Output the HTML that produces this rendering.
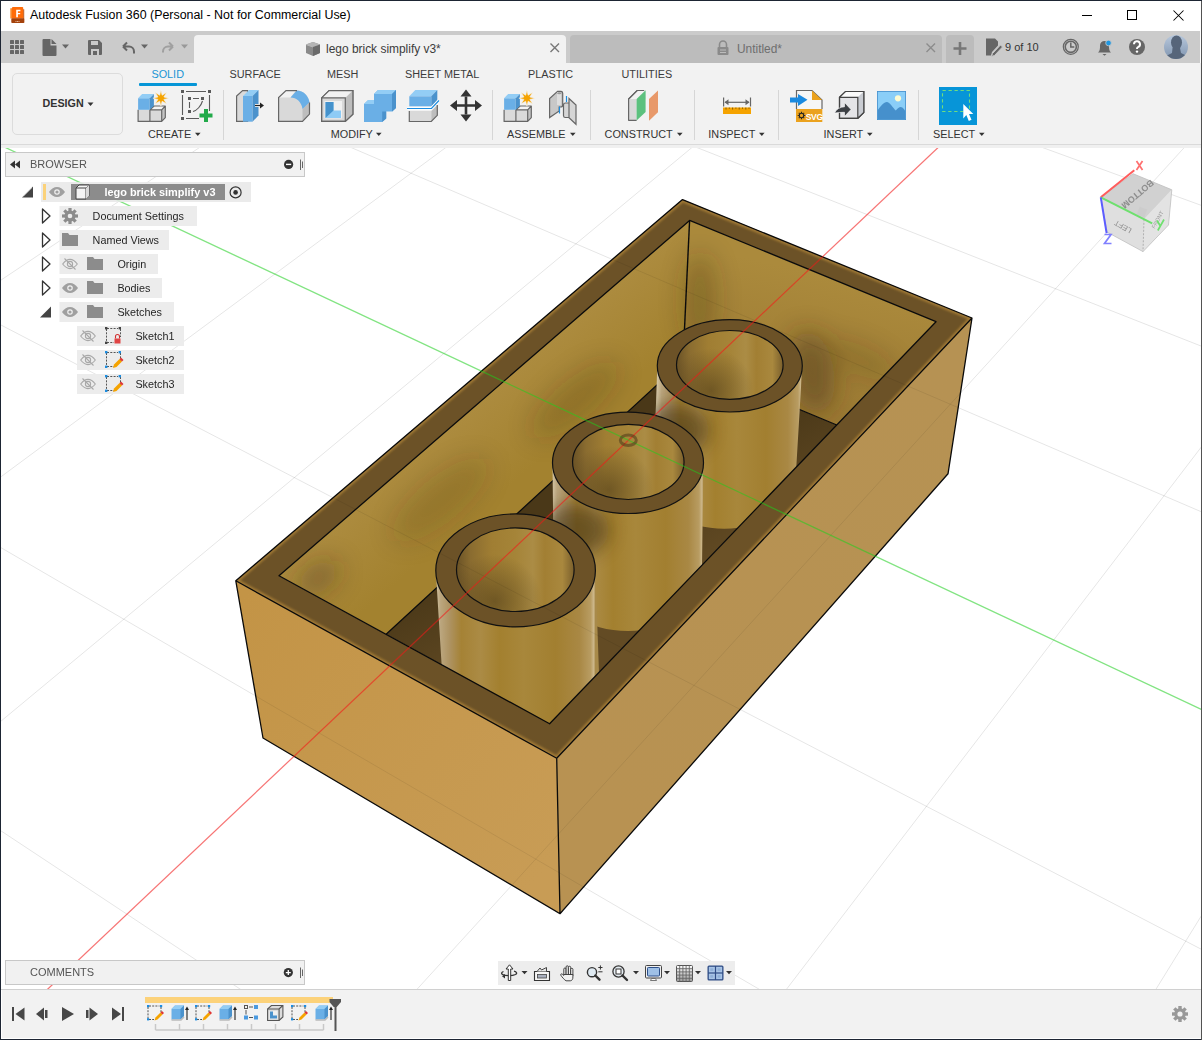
<!DOCTYPE html>
<html><head><meta charset="utf-8">
<style>
*{margin:0;padding:0;box-sizing:border-box}
html,body{width:1202px;height:1040px;overflow:hidden;background:#1d2533;font-family:"Liberation Sans",sans-serif}
.a{position:absolute}
.t{position:absolute;white-space:nowrap;line-height:1}
svg{position:absolute;overflow:visible}
</style></head><body>

<div class="a" style="left:1px;top:1px;width:1200px;height:1038px;background:#fff"></div>
<div class="a" style="left:1201px;top:1px;width:1px;height:1039px;background:#525252"></div>
<svg style="left:9px;top:6px" width="17" height="19" viewBox="0 0 17 19">
<path d="M1.3 2.2h2v10.3h-2z" fill="#f98a2c"/>
<rect x="3" y="1" width="11.2" height="11.6" rx="0.8" fill="#ff6c0a"/>
<path d="M14.2 3.2h1v13.5h-1z" fill="#c4520c"/>
<rect x="2.3" y="12.3" width="12.9" height="4.8" rx="0.8" fill="#a4420c"/>
<path d="M7.2 3.8h4.2v1.5h-2.5v1.6h2.3v1.4h-2.3v3h-1.7z" fill="#fff"/>
<path d="M6.5 15.5h4.5" stroke="#e8b898" stroke-width="1.2" stroke-dasharray="1 0.5"/>
</svg>
<div class="t" style="left:30px;top:9.49px;font-size:12.42px;color:#000;font-weight:normal;letter-spacing:0px">Autodesk Fusion 360 (Personal - Not for Commercial Use)</div>
<svg style="left:1075px;top:5px" width="120" height="22">
<path d="M7 10.5h10" stroke="#000" stroke-width="1"/>
<rect x="52.5" y="5.5" width="9" height="9" fill="none" stroke="#000" stroke-width="1"/>
<path d="M98.5 5.5l10 10M108.5 5.5l-10 10" stroke="#000" stroke-width="1.05"/>
</svg>
<div class="a" style="left:1px;top:31px;width:1199px;height:32px;background:#cbcbcb"></div>
<div class="a" style="left:194px;top:35px;width:372px;height:28px;background:#f2f2f2;border-radius:4px 4px 0 0"></div>
<div class="a" style="left:570px;top:35px;width:372px;height:28px;background:#bcbcbc;border-radius:4px 4px 0 0"></div>
<div class="a" style="left:946px;top:35px;width:28px;height:28px;background:#bcbcbc;border-radius:4px 4px 0 0"></div>
<svg style="left:0px;top:31px" width="200" height="32">
<g fill="#666">
<rect x="10" y="9" width="4" height="4" rx="0.6"/><rect x="15" y="9" width="4" height="4" rx="0.6"/><rect x="20" y="9" width="4" height="4" rx="0.6"/>
<rect x="10" y="14" width="4" height="4" rx="0.6"/><rect x="15" y="14" width="4" height="4" rx="0.6"/><rect x="20" y="14" width="4" height="4" rx="0.6"/>
<rect x="10" y="19" width="4" height="4" rx="0.6"/><rect x="15" y="19" width="4" height="4" rx="0.6"/><rect x="20" y="19" width="4" height="4" rx="0.6"/>
<path d="M43 8h7.5v6.5h6v9.5a1 1 0 0 1-1 1h-12a1 1 0 0 1-1-1v-15a1 1 0 0 1 1-1z"/><path d="M51.5 8l5 5h-5z"/>
<path d="M62 13.5h7l-3.5 4z"/>
<path d="M88 9h11l3 3v11a1 1 0 0 1-1 1h-12a1 1 0 0 1-1-1v-13a1 1 0 0 1 1-1zM91 10v4h7v-4zM91 18v6h2v-4h4v4h2v-6z"/>
<path d="M141 13.5h7l-3.5 4z"/>
</g>
<path d="M123 15.5l4-4M123 15.5l4 4M123.5 15.5h5.5a5 5 0 0 1 5 5v2" fill="none" stroke="#666" stroke-width="2"/>
<g fill="#999"><path d="M181 13.5h7l-3.5 4z"/></g>
<path d="M173 15.5l-4-4M173 15.5l-4 4M172.5 15.5h-4.5a5 5 0 0 0 -5 5v1" fill="none" stroke="#a0a0a0" stroke-width="2"/>
</svg>
<svg style="left:304px;top:40px" width="18" height="18" viewBox="0 0 18 18">
<path d="M2 4.5l7-2.5 7 2.5v8.5l-7 3-7-3z" fill="#8a8a8a"/>
<path d="M2 4.5l7 2.5 7-2.5" fill="none" stroke="#c8c8c8" stroke-width="0.8"/>
<path d="M2 4.5l7-2.5 7 2.5-7 2.5z" fill="#b5b5b5"/>
<path d="M9 7v9l7-3v-8.5z" fill="#6b6b6b"/>
</svg>
<div class="t tab1" style="left:326px;top:43.89px;font-size:11.94px;color:#3c3c3c;font-weight:normal;">lego brick simplify v3*</div>
<svg style="left:548px;top:41px" width="14" height="14"><path d="M2.5 2.5l8.5 8.5M11 2.5l-8.5 8.5" stroke="#777" stroke-width="1.4"/></svg>
<svg style="left:716px;top:40px" width="14" height="16" viewBox="0 0 14 16">
<path d="M3.5 7v-2.5a3.5 3.5 0 0 1 7 0v2.5" fill="none" stroke="#8a8a8a" stroke-width="1.6"/>
<rect x="1.5" y="7" width="11" height="8" rx="1" fill="#8a8a8a"/>
<path d="M4 10h6M4 12.5h6" stroke="#bcbcbc" stroke-width="1"/>
</svg>
<div class="t tab2" style="left:737px;top:43.93px;font-size:11.9px;color:#6e6e6e;font-weight:normal;">Untitled*</div>
<svg style="left:924px;top:41px" width="14" height="14"><path d="M2.5 2.5l8.5 8.5M11 2.5l-8.5 8.5" stroke="#8c8c8c" stroke-width="1.4"/></svg>
<svg style="left:952px;top:41px" width="16" height="16"><path d="M1.5 7.5h13M8 1v13" stroke="#777" stroke-width="2.6"/></svg>
<svg style="left:980px;top:31px" width="220" height="32">
<path d="M6 7.5h9l3 3v4l-6 6.5-1 3.5h-5z" fill="#666"/>
<path d="M12.5 22.5l8-8.5 2 2-8 8.5-3 1z" fill="#666" stroke="#c9c9c9" stroke-width="1"/>
<circle cx="90.8" cy="15.8" r="7.5" fill="none" stroke="#666" stroke-width="1.2"/>
<circle cx="90.8" cy="15.8" r="5.6" fill="none" stroke="#666" stroke-width="1.6"/>
<path d="M90.8 11.5v4.6h3.5" fill="none" stroke="#666" stroke-width="1.5"/>
<path d="M118 21.5c2-1.5 2-4 2-7a4.5 4.5 0 0 1 9 0c0 3 0 5.5 2 7z" fill="#666"/>
<path d="M122.5 23h4l-2 1.8z" fill="#666"/>
<circle cx="128.5" cy="12" r="2.8" fill="#1e96e0" stroke="#c9c9c9" stroke-width="0.8"/>
<circle cx="157" cy="16" r="8" fill="#666"/>
<path d="M154 13.3a3 3 0 1 1 4 2.8c-1 .4-1 1-1 2" fill="none" stroke="#fff" stroke-width="2"/>
<circle cx="157" cy="20.6" r="1.2" fill="#fff"/>
<defs><linearGradient id="avg" x1="0" y1="0" x2="0" y2="1"><stop offset="0" stop-color="#b8c8dc"/><stop offset="1" stop-color="#8095b0"/></linearGradient>
<clipPath id="avc"><circle cx="196" cy="16" r="12"/></clipPath></defs>
<circle cx="196" cy="16" r="12" fill="url(#avg)"/>
<g clip-path="url(#avc)" fill="#56657a"><ellipse cx="196.5" cy="11.5" rx="5.5" ry="7"/><path d="M192.5 17h7.5l1 5 6 3v4h-21v-4l6-3z"/></g>
</svg>
<div class="t ver" style="left:1005px;top:41.69px;font-size:11px;color:#333;font-weight:normal;">9 of 10</div>
<div class="a" style="left:1px;top:63px;width:1200px;height:81px;background:#f2f2f2"></div>
<div class="a" style="left:1px;top:144px;width:1200px;height:1px;background:#dadada"></div>
<div class="a" style="left:1px;top:145px;width:1200px;height:3px;background:#f0f0f0"></div>
<div class="a" style="left:12px;top:73px;width:111px;height:62px;border:1.5px solid #dcdcdc;border-radius:5px"></div>
<div class="t design" style="left:42.5px;top:98.30px;font-size:10.75px;color:#333;font-weight:bold;">DESIGN</div>
<svg style="left:87px;top:101px" width="8" height="6"><path d="M0.5 1.5h6l-3 3.5z" fill="#333"/></svg>
<div class="t tb solid" style="left:151.4px;top:69.30px;font-size:10.87px;color:#1a95d5;font-weight:normal;">SOLID</div>
<div class="a" style="left:139px;top:83px;width:58px;height:3px;background:#0696d7;border-radius:1px"></div>
<div class="t tb" style="left:229.5px;top:69.32px;font-size:10.85px;color:#3c3c3c;font-weight:normal;">SURFACE</div>
<div class="t tb" style="left:327px;top:69.32px;font-size:10.85px;color:#3c3c3c;font-weight:normal;">MESH</div>
<div class="t tb" style="left:405px;top:69.32px;font-size:10.85px;color:#3c3c3c;font-weight:normal;">SHEET METAL</div>
<div class="t tb" style="left:528px;top:69.32px;font-size:10.85px;color:#3c3c3c;font-weight:normal;">PLASTIC</div>
<div class="t tb" style="left:621.5px;top:69.32px;font-size:10.85px;color:#3c3c3c;font-weight:normal;">UTILITIES</div>
<div class="t gl" style="left:148px;top:128.82px;font-size:10.85px;color:#333;font-weight:normal;">CREATE</div>
<svg style="left:194.5px;top:131px" width="8" height="6"><path d="M0 1.8h5.6l-2.8 3.2z" fill="#333"/></svg>
<div class="t gl" style="left:330.7px;top:128.82px;font-size:10.85px;color:#333;font-weight:normal;">MODIFY</div>
<svg style="left:376px;top:131px" width="8" height="6"><path d="M0 1.8h5.6l-2.8 3.2z" fill="#333"/></svg>
<div class="t gl" style="left:507px;top:128.82px;font-size:10.85px;color:#333;font-weight:normal;">ASSEMBLE</div>
<svg style="left:569.5px;top:131px" width="8" height="6"><path d="M0 1.8h5.6l-2.8 3.2z" fill="#333"/></svg>
<div class="t gl" style="left:604.6px;top:128.82px;font-size:10.85px;color:#333;font-weight:normal;">CONSTRUCT</div>
<svg style="left:676.5px;top:131px" width="8" height="6"><path d="M0 1.8h5.6l-2.8 3.2z" fill="#333"/></svg>
<div class="t gl" style="left:708.3px;top:128.82px;font-size:10.85px;color:#333;font-weight:normal;">INSPECT</div>
<svg style="left:758.5px;top:131px" width="8" height="6"><path d="M0 1.8h5.6l-2.8 3.2z" fill="#333"/></svg>
<div class="t gl" style="left:823.6px;top:128.82px;font-size:10.85px;color:#333;font-weight:normal;">INSERT</div>
<svg style="left:866.5px;top:131px" width="8" height="6"><path d="M0 1.8h5.6l-2.8 3.2z" fill="#333"/></svg>
<div class="t gl" style="left:933px;top:128.82px;font-size:10.85px;color:#333;font-weight:normal;">SELECT</div>
<svg style="left:978.5px;top:131px" width="8" height="6"><path d="M0 1.8h5.6l-2.8 3.2z" fill="#333"/></svg>
<div class="a" style="left:223px;top:90px;width:1px;height:50px;background:#d6d6d6"></div>
<div class="a" style="left:492px;top:90px;width:1px;height:50px;background:#d6d6d6"></div>
<div class="a" style="left:590px;top:90px;width:1px;height:50px;background:#d6d6d6"></div>
<div class="a" style="left:694px;top:90px;width:1px;height:50px;background:#d6d6d6"></div>
<div class="a" style="left:778px;top:90px;width:1px;height:50px;background:#d6d6d6"></div>
<div class="a" style="left:918px;top:90px;width:1px;height:50px;background:#d6d6d6"></div>
<svg style="left:0;top:0" width="1202" height="150"><g transform="translate(137.5,90)">
<path d="M0.6 19.8h11.8v11.6h-11.8z" fill="#dadada"/>
<path d="M12.4 19.8h11.8v11.6h-11.8z" fill="#dadada"/>
<path d="M12.4 19.8l4.2-3.8h11.2l-3.6 3.8z" fill="#f4f4f4"/>
<path d="M24.2 19.8l3.6-3.8v11.6l-3.6 3.8z" fill="#c4c4c4"/>
<path d="M0.6 19.8v11.6h23.6l3.6-3.8v-11.6h-11.2l-4.2 3.8M12.4 19.8v11.6M12.4 19.8h11.8l3.6-3.8M24.2 19.8v11.6" fill="none" stroke="#666" stroke-width="1.2" stroke-linejoin="round"/>
<path d="M0.6 8.2h11.6v11.6h-11.6z" fill="#6aafe6"/>
<path d="M0.6 8.2l4-4.2h11.8l-4.2 4.2z" fill="#93cdf5"/>
<path d="M12.2 8.2l4.2-4.2v12l-4.2 3.8z" fill="#4b92cc"/>
<path d="M23.40 0.20 L24.62 5.24 L29.06 2.54 L26.36 6.98 L31.40 8.20 L26.36 9.42 L29.06 13.86 L24.62 11.16 L23.40 16.20 L22.18 11.16 L17.74 13.86 L20.44 9.42 L15.40 8.20 L20.44 6.98 L17.74 2.54 L22.18 5.24z" fill="#f5a300" stroke="#f4f4f4" stroke-width="0.6"/>
</g><g transform="translate(181,90)">
<g fill="#5a5a5a"><rect x="0" y="0" width="3" height="3"/><rect x="27" y="0" width="3" height="3"/><rect x="0" y="27" width="3" height="3"/>
<rect x="7" y="7" width="3" height="3"/><rect x="20" y="7" width="3" height="3"/><rect x="7" y="20" width="3" height="3"/></g>
<path d="M5 1.5h20M1.5 5v20M5 28.5h13M28.5 5v16M12 8.5h6M8.5 12v6" stroke="#5a5a5a" stroke-width="1.1"/>
<path d="M21.5 11c-1.5 5-5.5 9.5-9.5 10.5" fill="none" stroke="#5a5a5a" stroke-width="1.1"/>
<path d="M23 19h4v4.5h4.5v4h-4.5v4.5h-4v-4.5h-4.5v-4h4.5z" fill="#22aa4a"/>
</g><g transform="translate(236,90)">
<path d="M0.6 31.4v-25.4l6-5.4h5v30.8z" fill="#dadada" stroke="#666" stroke-width="1.2"/>
<path d="M7 31.7v-25.7h9.5v25.7z" fill="#6aafe6"/>
<path d="M7 6l6-6h9.5l-6 6z" fill="#93cdf5"/>
<path d="M16.5 6l6-6v25.5l-6 6.2z" fill="#4b92cc"/>
<path d="M19 15.5h7.5" stroke="#fff" stroke-width="3"/>
<path d="M19 15.5h6" stroke="#222" stroke-width="1.3"/><path d="M24 12.5l4 3-4 3z" fill="#222"/>
</g><g transform="translate(278,90)">
<path d="M0.6 31.4v-23.8l7.4-7h10c8 0 13.5 6 13.5 14v9.5l-7 7.3z" fill="#d9d9d9"/>
<path d="M0.6 7.6l7.4-7h10l-5.5 7z" fill="#f2f2f2"/>
<path d="M24.5 31.4v-12.5l7-6.6v11.8z" fill="#bdbdbd"/>
<path d="M12.5 7.6c6 0 11 4.5 12 11.3l7-6.6c-1-6.5-6-11.7-12.8-11.7z" fill="#6aafe6"/>
<path d="M19 0.6h-11l-7.4 7v23.8h23.9l7-7.3v-11.5" fill="none" stroke="#666" stroke-width="1.2"/>
</g><g transform="translate(321,90)">
<path d="M0.6 31.4v-23.5l7.5-7.3h23.8v23.6l-7.6 7.2z" fill="#d9d9d9" stroke="#666" stroke-width="1.2"/>
<path d="M0.6 7.9l7.5-7.3h23.8l-7.6 7.3z" fill="#f2f2f2"/>
<path d="M24.3 7.9l7.6-7.3v23.6l-7.6 7.2z" fill="#bdbdbd"/>
<path d="M0.6 31.4v-23.5l7.5-7.3h23.8v23.6l-7.6 7.2zM0.6 7.9h23.7v23.5" fill="none" stroke="#666" stroke-width="1.2"/>
<rect x="3.5" y="11" width="17.5" height="17.5" fill="#f0f0f0"/>
<path d="M4.5 12h8v8.5h7.5v7.5h-15.5z" fill="#8ecbf5"/>
<path d="M4.5 12h8v8.5l-8 7.5z" fill="#4592cc"/>
</g><g transform="translate(364,90)">
<path d="M10 4l4-4h18v18l-3.6 3.6h-6.2v7l-4 3.5h-18.2v-18l4-3.8h6z" fill="#6aafe6"/>
<path d="M10 4l4-4h18l-4 4zM0 14l4-4h6v4z" fill="#93cdf5"/>
<path d="M28 4l4-4v18l-4 3.6zM18.2 21.6h4v7l-4 3.5z" fill="#4b92cc"/>
</g><g transform="translate(407,90)">
<path d="M2.3 6.3l6-6.3h22l-6 6.3z" fill="#93cdf5"/>
<path d="M2.3 6.3h22v10h-22z" fill="#6aafe6"/>
<path d="M24.3 6.3l6-6.3v10l-6 6.3z" fill="#4b92cc"/>
<path d="M0 18.5h24.5l7.5-8" fill="none" stroke="#fff" stroke-width="3"/>
<path d="M0 18.5h24.5l7.5-8" fill="none" stroke="#1c8de0" stroke-width="1.2"/>
<path d="M2.3 21h22v10.5h-22z" fill="#d9d9d9"/>
<path d="M24.3 21l6-6v10.3l-6 6.2z" fill="#bdbdbd"/>
<path d="M2.3 21v10.5h22l6-6.2v-10.3" fill="none" stroke="#666" stroke-width="1.2"/>
</g><g transform="translate(466,105.5)" fill="#333">
<path d="M-1.3 -9h2.6v18h-2.6zM-9 -1.3h18v2.6h-18z"/>
<path d="M0 -16l5.5 7h-11zM0 16l5.5-7h-11zM-16 0l7-5.5v11zM16 0l-7-5.5v11z"/>
</g><g transform="translate(503.5,90)">
<path d="M0.6 19.8h11.8v11.6h-11.8z" fill="#dadada"/>
<path d="M12.4 19.8h11.8v11.6h-11.8z" fill="#dadada"/>
<path d="M12.4 19.8l4.2-3.8h11.2l-3.6 3.8z" fill="#f4f4f4"/>
<path d="M24.2 19.8l3.6-3.8v11.6l-3.6 3.8z" fill="#c4c4c4"/>
<path d="M0.6 19.8v11.6h23.6l3.6-3.8v-11.6h-11.2l-4.2 3.8M12.4 19.8v11.6M12.4 19.8h11.8l3.6-3.8M24.2 19.8v11.6" fill="none" stroke="#666" stroke-width="1.2" stroke-linejoin="round"/>
<path d="M0.6 8.2h11.6v11.6h-11.6z" fill="#6aafe6"/>
<path d="M0.6 8.2l4-4.2h11.8l-4.2 4.2z" fill="#93cdf5"/>
<path d="M12.2 8.2l4.2-4.2v12l-4.2 3.8z" fill="#4b92cc"/>
<path d="M23.40 0.20 L24.62 5.24 L29.06 2.54 L26.36 6.98 L31.40 8.20 L26.36 9.42 L29.06 13.86 L24.62 11.16 L23.40 16.20 L22.18 11.16 L17.74 13.86 L20.44 9.42 L15.40 8.20 L20.44 6.98 L17.74 2.54 L22.18 5.24z" fill="#f5a300" stroke="#f4f4f4" stroke-width="0.6"/>
</g><g transform="translate(549,91)">
<path d="M0.6 26.5v-19l8-7.2h3.5a2 2 0 0 1 1.6 2v11.7a2 2 0 0 1-2 2h-1.5v4z" fill="#c8c8c8" stroke="#666" stroke-width="1.2"/>
<path d="M8 1h4v13h-4z" fill="#dedede"/><ellipse cx="10.3" cy="2.3" rx="2.2" ry="1" fill="#999"/>
<path d="M10.5 15.5v7" stroke="#1c8de0" stroke-width="1.2"/>
<path d="M20 7.5l7 6.5v19.3l-7-6.5zM14.5 13.5a2 2 0 0 1 1.8-1.5h3.7v14.5h-3.7a2 2 0 0 1-1.8-1.8z" fill="#d6d6d6" stroke="#666" stroke-width="1.2"/>
<path d="M17.5 5v6" stroke="#1c8de0" stroke-width="1.2"/>
</g><g transform="translate(628,90)">
<path d="M0.6 30.4v-21.4l8.5-8.5h7" fill="#f2f2f2" stroke="#666" stroke-width="1.2"/>
<path d="M0.6 9h8v21.4h-8z" fill="#d9d9d9"/>
<path d="M0.6 30.4v-21.4l8.5-8.5h7M0.6 30.4h8" fill="none" stroke="#666" stroke-width="1.2"/>
<path d="M8.6 9l9-8.8v21.8l-9 8.6z" fill="#5cc17e"/>
<path d="M21 9l9-8.5v21.7l-9 8.6z" fill="#e8996a"/>
</g><g transform="translate(723,97)">
<path d="M0.6 0.5v9M27.5 0.5v9" stroke="#666" stroke-width="1.2"/>
<path d="M2 5.3h24" stroke="#666" stroke-width="1.2"/><path d="M1.5 5.3l4-3v6zM26.5 5.3l-4-3v6z" fill="#666"/>
<rect x="0" y="10.5" width="28" height="6.5" fill="#f5a300"/>
<path d="M3 10.5v2M6.3 10.5v1.3M9.6 10.5v2M12.9 10.5v1.3M16.2 10.5v2M19.5 10.5v1.3M22.8 10.5v2M26 10.5v1.3" stroke="#6b4a00" stroke-width="0.8"/>
</g><g transform="translate(790,90)">
<path d="M6.5 19v-18.5h15.5l10 9.5v9" fill="#f6f6f6" stroke="#666" stroke-width="1.2"/>
<path d="M22 0.5l10 9.5h-10z" fill="#eba21e"/>
<rect x="6" y="19" width="26.3" height="13" fill="#eba21e"/>
<g transform="translate(11.5 25.5)" fill="none" stroke="#222" stroke-width="1.1"><circle r="2.2"/><path d="M0 -3.8v1.2M0 3.8v-1.2M-3.8 0h1.2M3.8 0h-1.2M-2.7 -2.7l.8 .8M2.7 2.7l-.8-.8M-2.7 2.7l.8-.8M2.7 -2.7l-.8 .8"/></g>
<text x="24.3" y="29.6" font-size="8.6" font-weight="bold" fill="#fff" text-anchor="middle" font-family="Liberation Sans" letter-spacing="-0.3">SVG</text>
<path d="M0 7.5h8v-3.5l9.5 5.7-9.5 6.3v-3.5h-8z" fill="#1a8ae0"/>
</g><g transform="translate(834,91)">
<path d="M5.5 27.3v-21l6-5.8h18.3v21l-6 5.8z" fill="#e4e4e7" stroke="#444" stroke-width="1.2"/>
<path d="M5.5 6.3l6-5.8h18.3l-6 5.8z" fill="#fbfbfb"/>
<path d="M23.8 6.3l6-5.8v21l-6 5.8z" fill="#c9ccd2"/>
<path d="M5.5 27.3v-21l6-5.8h18.3v21l-6 5.8zM5.5 6.3h18.3v21" fill="none" stroke="#444" stroke-width="1.2"/>
<path d="M0.5 22c2-4 5.5-6 10-6.2v-4.3l6.5 7-6.5 7v-4.2c-4 0-7.5 0.5-10 0.7z" fill="#3c3f44" stroke="#fff" stroke-width="0.6"/>
</g><g transform="translate(877,91)">
<rect x="0" y="0" width="29" height="29" fill="#4690cc"/>
<rect x="0.8" y="0.8" width="27.4" height="27.4" fill="#8acef8"/>
<path d="M0.8 19c3-4 6-8 9-8s6 6 9 8.5c2-2 3-3.5 5-3.5s4 3 4.4 4v8.2h-27.4z" fill="#4690cc"/>
<circle cx="21" cy="7.3" r="3.1" fill="#fdfbd2"/>
</g><g transform="translate(939,87)">
<rect x="0" y="0" width="38" height="38" fill="#0795d8"/>
<rect x="3.5" y="3.5" width="27" height="21" fill="none" stroke="#6fdc7f" stroke-width="1.1" stroke-dasharray="3.3 2.7"/>
<path d="M24.3 17v14.5l3-3.5 2.5 6 2.7-1.2-2.5-5.8h4.3z" fill="#fff"/>
</g></svg>
<svg style="left:0;top:0" width="1202" height="1040"><defs><clipPath id="cv"><rect x="1" y="148" width="1200" height="841"/></clipPath><filter id="bl8" x="-50%" y="-50%" width="200%" height="200%"><feGaussianBlur stdDeviation="9"/></filter><filter id="bl4" x="-50%" y="-50%" width="200%" height="200%"><feGaussianBlur stdDeviation="4"/></filter><linearGradient id="gLeft" gradientUnits="userSpaceOnUse" x1="240" y1="600" x2="560" y2="850"><stop offset="0" stop-color="#c39446"/><stop offset="1" stop-color="#c89c55"/></linearGradient><linearGradient id="gRight" gradientUnits="userSpaceOnUse" x1="600" y1="800" x2="960" y2="380"><stop offset="0" stop-color="#b89252"/><stop offset="1" stop-color="#b69253"/></linearGradient><linearGradient id="gFL" gradientUnits="userSpaceOnUse" x1="480" y1="390" x2="540" y2="460"><stop offset="0" stop-color="#ad8c40"/><stop offset="1" stop-color="#a3822f"/></linearGradient><linearGradient id="gFR" gradientUnits="userSpaceOnUse" x1="800" y1="270" x2="770" y2="400"><stop offset="0" stop-color="#ab8a3c"/><stop offset="1" stop-color="#9c7a33"/></linearGradient><linearGradient id="gbt3" gradientUnits="userSpaceOnUse" x1="657.3" y1="0" x2="802.3" y2="0"><stop offset="0" stop-color="#d2c3a2"/><stop offset="0.03" stop-color="#bba67e"/><stop offset="0.09" stop-color="#ad9260"/><stop offset="0.16" stop-color="#a58235"/><stop offset="0.28" stop-color="#ab8b45"/><stop offset="0.4" stop-color="#a3802f"/><stop offset="0.55" stop-color="#a8873b"/><stop offset="0.75" stop-color="#a27f30"/><stop offset="0.9" stop-color="#a98844"/><stop offset="0.97" stop-color="#b89c62"/><stop offset="0.99" stop-color="#cdb88c"/><stop offset="1" stop-color="#a88a4a"/></linearGradient><linearGradient id="git3" gradientUnits="userSpaceOnUse" x1="676.5" y1="0" x2="783.1" y2="0"><stop offset="0" stop-color="#6a5226"/><stop offset="0.12" stop-color="#8a6c30"/><stop offset="0.3" stop-color="#a07e33"/><stop offset="0.5" stop-color="#a58438"/><stop offset="0.65" stop-color="#ab8c45"/><stop offset="0.75" stop-color="#a27f33"/><stop offset="0.9" stop-color="#a9883e"/><stop offset="1" stop-color="#7a5f2c"/></linearGradient><radialGradient id="gst3" gradientUnits="userSpaceOnUse" cx="711.1" cy="390.7" r="42.6"><stop offset="0" stop-color="#3e2f14" stop-opacity="0.5"/><stop offset="1" stop-color="#3e2f14" stop-opacity="0"/></radialGradient><linearGradient id="gbt2" gradientUnits="userSpaceOnUse" x1="552.5" y1="0" x2="703.5" y2="0"><stop offset="0" stop-color="#d2c3a2"/><stop offset="0.03" stop-color="#bba67e"/><stop offset="0.09" stop-color="#ad9260"/><stop offset="0.16" stop-color="#a58235"/><stop offset="0.28" stop-color="#ab8b45"/><stop offset="0.4" stop-color="#a3802f"/><stop offset="0.55" stop-color="#a8873b"/><stop offset="0.75" stop-color="#a27f30"/><stop offset="0.9" stop-color="#a98844"/><stop offset="0.97" stop-color="#b89c62"/><stop offset="0.99" stop-color="#cdb88c"/><stop offset="1" stop-color="#a88a4a"/></linearGradient><linearGradient id="git2" gradientUnits="userSpaceOnUse" x1="572.5" y1="0" x2="684.0" y2="0"><stop offset="0" stop-color="#6a5226"/><stop offset="0.12" stop-color="#8a6c30"/><stop offset="0.3" stop-color="#a07e33"/><stop offset="0.5" stop-color="#a58438"/><stop offset="0.65" stop-color="#ab8c45"/><stop offset="0.75" stop-color="#a27f33"/><stop offset="0.9" stop-color="#a9883e"/><stop offset="1" stop-color="#7a5f2c"/></linearGradient><radialGradient id="gst2" gradientUnits="userSpaceOnUse" cx="608.8" cy="490.1" r="44.6"><stop offset="0" stop-color="#3e2f14" stop-opacity="0.5"/><stop offset="1" stop-color="#3e2f14" stop-opacity="0"/></radialGradient><linearGradient id="gbt1" gradientUnits="userSpaceOnUse" x1="435.8" y1="0" x2="595.4" y2="0"><stop offset="0" stop-color="#d2c3a2"/><stop offset="0.03" stop-color="#bba67e"/><stop offset="0.09" stop-color="#ad9260"/><stop offset="0.16" stop-color="#a58235"/><stop offset="0.28" stop-color="#ab8b45"/><stop offset="0.4" stop-color="#a3802f"/><stop offset="0.55" stop-color="#a8873b"/><stop offset="0.75" stop-color="#a27f30"/><stop offset="0.9" stop-color="#a98844"/><stop offset="0.97" stop-color="#b89c62"/><stop offset="0.99" stop-color="#cdb88c"/><stop offset="1" stop-color="#a88a4a"/></linearGradient><linearGradient id="git1" gradientUnits="userSpaceOnUse" x1="456.5" y1="0" x2="574.1" y2="0"><stop offset="0" stop-color="#6a5226"/><stop offset="0.12" stop-color="#8a6c30"/><stop offset="0.3" stop-color="#a07e33"/><stop offset="0.5" stop-color="#a58438"/><stop offset="0.65" stop-color="#ab8c45"/><stop offset="0.75" stop-color="#a27f33"/><stop offset="0.9" stop-color="#a9883e"/><stop offset="1" stop-color="#7a5f2c"/></linearGradient><radialGradient id="gst1" gradientUnits="userSpaceOnUse" cx="494.7" cy="601.1" r="47.0"><stop offset="0" stop-color="#3e2f14" stop-opacity="0.5"/><stop offset="1" stop-color="#3e2f14" stop-opacity="0"/></radialGradient></defs><g clip-path="url(#cv)"><path d="M-3572.8 -1533.6L-7839.9 11014.0M-3572.8 -1533.6L-5019.8 9239.9M-3572.8 -1533.6L-2890.0 8025.0M-3572.8 -1533.6L-1198.7 7031.7M-3572.8 -1533.6L137.7 6150.1M-3572.8 -1533.6L1175.6 5361.8M-3572.8 -1533.6L1974.9 4669.5M-3572.8 -1533.6L2593.0 4071.5M-3572.8 -1533.6L3077.2 3559.3M-3572.8 -1533.6L3462.9 3121.3M-3572.8 -1533.6L3775.4 2745.8M-3572.8 -1533.6L4033.1 2422.0M-3572.8 -1533.6L4248.7 2141.1M-3572.8 -1533.6L4431.8 1895.8M-3572.8 -1533.6L4589.0 1680.0M-3572.8 -1533.6L4725.6 1489.1M-3572.8 -1533.6L4845.3 1319.0M-3572.8 -1533.6L4951.1 1166.7M-3572.8 -1533.6L5045.3 1029.6M-3572.8 -1533.6L5129.8 905.6M-3572.8 -1533.6L5205.9 792.8M-3572.8 -1533.6L5275.0 690.0M-3572.8 -1533.6L5337.9 595.8M-3572.8 -1533.6L5395.4 509.2M-3572.8 -1533.6L5448.3 429.3M2716.0 -1532.9L8087.4 6144.9M2716.0 -1532.9L6859.9 5958.5M2716.0 -1532.9L5708.2 5824.1M2716.0 -1532.9L4599.4 5703.6M2716.0 -1532.9L3523.4 5562.3M2716.0 -1532.9L2490.4 5374.3M2716.0 -1532.9L1522.7 5129.1M2716.0 -1532.9L643.4 4832.6M2716.0 -1532.9L-132.9 4502.0M2716.0 -1532.9L-803.9 4157.7M2716.0 -1532.9L-1376.8 3817.0M2716.0 -1532.9L-1863.8 3491.5M2716.0 -1532.9L-2278.6 3187.9M2716.0 -1532.9L-2633.8 2908.6M2716.0 -1532.9L-2940.3 2653.9M2716.0 -1532.9L-3207.2 2422.4M2716.0 -1532.9L-3441.4 2212.5M2716.0 -1532.9L-3648.9 2021.9M2716.0 -1532.9L-3834.0 1848.5M2716.0 -1532.9L-4000.4 1690.6M2716.0 -1532.9L-4150.9 1546.3M2716.0 -1532.9L-4287.8 1414.1M2716.0 -1532.9L-4413.1 1292.5M2716.0 -1532.9L-4528.2 1180.6M2716.0 -1532.9L-4634.4 1077.1" stroke="#000" stroke-opacity="0.1" stroke-width="1" fill="none"/><path d="M279.0 575.8L689.6 220.4L683.0 361.0L386.1 634.3Z" fill="url(#gFL)"/><path d="M689.6 220.4L936.0 321.7L836.8 425.0L683.0 361.0Z" fill="url(#gFR)"/><clipPath id="wl"><path d="M279.0 575.8L689.6 220.4L683.0 361.0L386.1 634.3ZM689.6 220.4L936.0 321.7L836.8 425.0L683.0 361.0Z"/></clipPath><filter id="bl12" x="-50%" y="-50%" width="200%" height="200%"><feGaussianBlur stdDeviation="12"/></filter><g clip-path="url(#wl)"><g filter="url(#bl12)" fill="#3e2e12"><ellipse cx="318" cy="578" rx="24" ry="14" opacity="0.34" transform="rotate(-35 318 578)"/><ellipse cx="440" cy="500" rx="60" ry="22" opacity="0.17" transform="rotate(-40 440 500)"/><ellipse cx="575" cy="400" rx="55" ry="20" opacity="0.2" transform="rotate(-40 575 400)"/><ellipse cx="812" cy="372" rx="22" ry="42" opacity="0.45" transform="rotate(-10 812 372)"/><ellipse cx="860" cy="360" rx="40" ry="14" opacity="0.18" transform="rotate(24 860 360)"/><ellipse cx="700" cy="300" rx="16" ry="48" opacity="0.28"/></g></g><linearGradient id="gFloor" gradientUnits="userSpaceOnUse" x1="600" y1="500" x2="650" y2="600"><stop offset="0" stop-color="#4a3818"/><stop offset="1" stop-color="#634b24"/></linearGradient><path d="M386.1 634.3L683.0 361.0L836.8 425.0L549.6 723.8Z" fill="url(#gFloor)"/><path d="M689.6 220.4L683 361" fill="none" stroke="#0a0a0a" stroke-width="1.4"/><path d="M386.1 634.3L683 361L836.8 425" fill="none" stroke="#0a0a0a" stroke-width="1.2"/><path d="M657.3 365.8L653.2 483.8A71.0 44.8 0 0 0 795.3 483.8L802.3 365.8A72.5 46.2 0 0 1 657.3 365.8Z" fill="url(#gbt3)"/><clipPath id="bct3"><path d="M657.3 365.8L653.2 483.8A71.0 44.8 0 0 0 795.3 483.8L802.3 365.8A72.5 46.2 0 0 1 657.3 365.8Z"/></clipPath><g clip-path="url(#bct3)"><ellipse cx="675" cy="430" rx="34" ry="26" fill="#3a2a10" opacity="0.55" filter="url(#bl8)"/></g><ellipse cx="729.8" cy="365.8" rx="72.5" ry="46.2" fill="#6c5227" stroke="#111" stroke-width="1.2"/><ellipse cx="729.8" cy="364.9" rx="53.3" ry="34.4" fill="url(#git3)"/><ellipse cx="729.8" cy="364.9" rx="53.3" ry="34.4" fill="url(#gst3)" stroke="#111" stroke-width="1.2"/><path d="M552.5 462.8L553.8 581.8A74.0 49.2 0 0 0 701.8 581.8L703.5 462.8A75.5 50.7 0 0 1 552.5 462.8Z" fill="url(#gbt2)"/><clipPath id="bct2"><path d="M552.5 462.8L553.8 581.8A74.0 49.2 0 0 0 701.8 581.8L703.5 462.8A75.5 50.7 0 0 1 552.5 462.8Z"/></clipPath><g clip-path="url(#bct2)"><ellipse cx="575" cy="530" rx="34" ry="26" fill="#3a2a10" opacity="0.55" filter="url(#bl8)"/></g><ellipse cx="628.0" cy="462.8" rx="75.5" ry="50.7" fill="#6c5227" stroke="#111" stroke-width="1.2"/><ellipse cx="628.3" cy="461.9" rx="55.75" ry="37.6" fill="url(#git2)"/><ellipse cx="628.3" cy="461.9" rx="55.75" ry="37.6" fill="url(#gst2)" stroke="#111" stroke-width="1.2"/><path d="M435.8 570.4L443.2 690.4A78.2 54.8 0 0 0 599.6 690.4L595.4 570.4A79.8 56.5 0 0 1 435.8 570.4Z" fill="url(#gbt1)"/><ellipse cx="515.6" cy="570.4" rx="79.8" ry="56.5" fill="#6c5227" stroke="#111" stroke-width="1.2"/><ellipse cx="515.3" cy="569.7" rx="58.8" ry="41.8" fill="url(#git1)"/><ellipse cx="515.3" cy="569.7" rx="58.8" ry="41.8" fill="url(#gst1)" stroke="#111" stroke-width="1.2"/><path d="M682.5 199.6L972.0 318.0L556.7 758.3L235.8 580.8ZM279.0 575.8L549.6 723.8L936.0 321.7L689.6 220.4Z" fill="#6c5227" fill-rule="evenodd"/><clipPath id="rimc"><path d="M682.5 199.6L972.0 318.0L556.7 758.3L235.8 580.8ZM279.0 575.8L549.6 723.8L936.0 321.7L689.6 220.4Z" clip-rule="evenodd"/></clipPath><filter id="bl1" x="-10%" y="-10%" width="120%" height="120%"><feGaussianBlur stdDeviation="1.3"/></filter><g clip-path="url(#rimc)"><path d="M682.5 199.6L972.0 318.0L556.7 758.3L235.8 580.8Z" fill="none" stroke="#b88a3a" stroke-width="5" stroke-opacity="0.7" filter="url(#bl1)"/></g><path d="M235.8 580.8L556.7 758.3L560.0 913.7L263.0 738.0Z" fill="url(#gLeft)"/><path d="M556.7 758.3L972.0 318.0L948.0 473.8L560.0 913.7Z" fill="url(#gRight)"/><path d="M682.5 199.6L972.0 318.0L948.0 473.8L560.0 913.7L263.0 738.0L235.8 580.8ZM235.8 580.8L556.7 758.3L972 318M556.7 758.3L560 913.7" fill="none" stroke="#0a0a0a" stroke-width="1.3" stroke-linejoin="round"/><path d="M279.0 575.8L549.6 723.8L936.0 321.7L689.6 220.4Z" fill="none" stroke="#0a0a0a" stroke-width="1.3" stroke-linejoin="round"/><path d="M-3572.8 -1533.6L-7839.9 11014.0M-3572.8 -1533.6L-5019.8 9239.9M-3572.8 -1533.6L-2890.0 8025.0M-3572.8 -1533.6L-1198.7 7031.7M-3572.8 -1533.6L137.7 6150.1M-3572.8 -1533.6L1175.6 5361.8M-3572.8 -1533.6L1974.9 4669.5M-3572.8 -1533.6L2593.0 4071.5M-3572.8 -1533.6L3077.2 3559.3M-3572.8 -1533.6L3462.9 3121.3M-3572.8 -1533.6L3775.4 2745.8M-3572.8 -1533.6L4033.1 2422.0M-3572.8 -1533.6L4248.7 2141.1M-3572.8 -1533.6L4431.8 1895.8M-3572.8 -1533.6L4589.0 1680.0M-3572.8 -1533.6L4725.6 1489.1M-3572.8 -1533.6L4845.3 1319.0M-3572.8 -1533.6L4951.1 1166.7M-3572.8 -1533.6L5045.3 1029.6M-3572.8 -1533.6L5129.8 905.6M-3572.8 -1533.6L5205.9 792.8M-3572.8 -1533.6L5275.0 690.0M-3572.8 -1533.6L5337.9 595.8M-3572.8 -1533.6L5395.4 509.2M-3572.8 -1533.6L5448.3 429.3M2716.0 -1532.9L8087.4 6144.9M2716.0 -1532.9L6859.9 5958.5M2716.0 -1532.9L5708.2 5824.1M2716.0 -1532.9L4599.4 5703.6M2716.0 -1532.9L3523.4 5562.3M2716.0 -1532.9L2490.4 5374.3M2716.0 -1532.9L1522.7 5129.1M2716.0 -1532.9L643.4 4832.6M2716.0 -1532.9L-132.9 4502.0M2716.0 -1532.9L-803.9 4157.7M2716.0 -1532.9L-1376.8 3817.0M2716.0 -1532.9L-1863.8 3491.5M2716.0 -1532.9L-2278.6 3187.9M2716.0 -1532.9L-2633.8 2908.6M2716.0 -1532.9L-2940.3 2653.9M2716.0 -1532.9L-3207.2 2422.4M2716.0 -1532.9L-3441.4 2212.5M2716.0 -1532.9L-3648.9 2021.9M2716.0 -1532.9L-3834.0 1848.5M2716.0 -1532.9L-4000.4 1690.6M2716.0 -1532.9L-4150.9 1546.3M2716.0 -1532.9L-4287.8 1414.1M2716.0 -1532.9L-4413.1 1292.5M2716.0 -1532.9L-4528.2 1180.6M2716.0 -1532.9L-4634.4 1077.1" stroke="#000" stroke-opacity="0.07" stroke-width="1" fill="none" clip-path="url(#brk)"/><clipPath id="brk"><path d="M682.5 199.6L972.0 318.0L948.0 473.8L560.0 913.7L263.0 738.0L235.8 580.8Z"/></clipPath><path d="M2716.0 -1532.9L-2278.6 3187.9" stroke="#ff1a1a" stroke-opacity="0.55" stroke-width="1.3"/><path d="M-3572.8 -1533.6L4248.7 2141.1" stroke="#1ee01e" stroke-opacity="0.5" stroke-width="1.3"/><ellipse cx="628.3" cy="440.2" rx="8" ry="5.2" fill="none" stroke="#4a3818" stroke-opacity="0.55" stroke-width="3"/></g></svg>
<svg style="left:1080px;top:150px" width="122" height="120" viewBox="0 0 122 120">
<path d="M20.8 47.3L53 23.7 91.8 39.8 88.5 75 63 101.6 27 82z" fill="#dcdcdc" fill-opacity="0.85"/>
<path d="M20.8 47.3L53 23.7 91.8 39.8 64 69.3z" fill="#d0d0d0" fill-opacity="0.9"/>
<path d="M64 69.3L91.8 39.8 88.5 75 63 101.6z" fill="#e4e4e4" fill-opacity="0.9"/>
<path d="M20.8 47.3L64 69.3 63 101.6 27 82z" fill="#e0e0e0" fill-opacity="0.9"/>
<path d="M64 69.3L63 101.6" stroke="#999" stroke-width="0.7" stroke-dasharray="2 1.5"/>
<path d="M20.8 47.3L53 23.7 91.8 39.8 88.5 75 63 101.6 27 82z" fill="none" stroke="#c0c0c0" stroke-width="0.8"/>
<rect x="58" y="58" width="8" height="8" fill="#c8c8c8" opacity="0.5" transform="rotate(20 62 62)"/>
<text transform="translate(57.2 43.6) rotate(140)" font-size="9" font-weight="bold" fill="#8e8e8e" text-anchor="middle" dominant-baseline="middle" font-family="Liberation Sans">BOTTOM</text>
<text transform="translate(43.3 76.2) rotate(210)" font-size="7.5" fill="#8e8e8e" text-anchor="middle" dominant-baseline="middle" font-family="Liberation Sans">LEFT</text>
<text transform="translate(78 70) rotate(-62)" font-size="5.5" fill="#9a9a9a" text-anchor="middle" dominant-baseline="middle" font-family="Liberation Sans">FRONT</text>
<path d="M20.8 47.3L54.3 20.2" stroke="#ff5c5c" stroke-width="2"/>
<path d="M56.5 11l6 9M62.5 11l-6 9" stroke="#ff7070" stroke-width="1.7"/>
<path d="M20.8 47.3L72.2 73.3" stroke="#6ee06e" stroke-width="2"/>
<path d="M77 70.5l3.2 5.2M84 69.5l-6.2 11" stroke="#70e070" stroke-width="1.7"/>
<path d="M20.8 47.3L26.6 83.1" stroke="#5c5cff" stroke-width="2"/>
<path d="M24.5 84.5h6.5l-6.5 9h7" fill="none" stroke="#8080ff" stroke-width="1.7"/>
</svg>
<div class="a" style="left:5px;top:152px;width:300px;height:25px;background:#f1f1f1;border:1px solid #c8c8c8"></div>
<svg style="left:9px;top:160px" width="14" height="10"><path d="M1 4.5l5-4v8zM6 4.5l5-4v8z" fill="#333"/></svg>
<div class="t brow" style="left:30px;top:158.69px;font-size:11px;color:#555;font-weight:normal;">BROWSER</div>
<svg style="left:282px;top:158px" width="24" height="14"><circle cx="6.6" cy="6.4" r="4.6" fill="#333"/><path d="M4 6.4h5.2" stroke="#fff" stroke-width="1.4"/><path d="M18.5 1.5v10.5M20.5 3.5v6.5" stroke="#666" stroke-width="1"/></svg>
<svg style="left:0;top:0" width="320" height="400"><rect x="41" y="182" width="210" height="20" fill="#e8e8e8" fill-opacity="0.85"/><rect x="43" y="184" width="3" height="16" fill="#fbd27a"/><g transform="translate(49,192)"><path d="M0 0c2.5-3.5 5-5 8-5s5.5 1.5 8 5c-2.5 3.5-5 5-8 5s-5.5-1.5-8-5z" fill="#a0a0a0"/><circle cx="8" cy="0" r="2.8" fill="#f0f0f0"/><circle cx="8" cy="0" r="1.6" fill="#a0a0a0"/></g><rect x="71" y="184" width="154" height="16" fill="#8c8c8c"/><g transform="translate(75,184)"><path d="M1 4l3-3h10v11l-3 3h-10z" fill="#f4f4f4" stroke="#444" stroke-width="1"/><path d="M1 4h10v11M11 4l3-3" fill="none" stroke="#444" stroke-width="1"/><path d="M11 4l3-3v11l-3 3z" fill="#d8d8d8"/></g><circle cx="235.6" cy="192.4" r="5.5" fill="none" stroke="#333" stroke-width="1.2"/><circle cx="235.6" cy="192.4" r="2.3" fill="#333"/><path d="M22 197.5l11-11v11z" fill="#444"/><path d="M23.5 196.5l8.5-8.5" stroke="#bbb" stroke-width="0.6"/><rect x="59.5" y="206" width="137.5" height="20" fill="#ececec"/><path d="M42.5 209l7.5 7-7.5 7z" fill="none" stroke="#333" stroke-width="1.3" stroke-linejoin="round"/><g transform="translate(70,216)"><circle r="5.5" fill="#8c8c8c"/><rect x="-1.6" y="-8" width="3.2" height="4" fill="#8c8c8c" transform="rotate(0)"/><rect x="-1.6" y="-8" width="3.2" height="4" fill="#8c8c8c" transform="rotate(45)"/><rect x="-1.6" y="-8" width="3.2" height="4" fill="#8c8c8c" transform="rotate(90)"/><rect x="-1.6" y="-8" width="3.2" height="4" fill="#8c8c8c" transform="rotate(135)"/><rect x="-1.6" y="-8" width="3.2" height="4" fill="#8c8c8c" transform="rotate(180)"/><rect x="-1.6" y="-8" width="3.2" height="4" fill="#8c8c8c" transform="rotate(225)"/><rect x="-1.6" y="-8" width="3.2" height="4" fill="#8c8c8c" transform="rotate(270)"/><rect x="-1.6" y="-8" width="3.2" height="4" fill="#8c8c8c" transform="rotate(315)"/><circle r="2.3" fill="#ececec"/></g><rect x="59.5" y="230" width="109.5" height="20" fill="#ececec"/><path d="M42.5 233l7.5 7-7.5 7z" fill="none" stroke="#333" stroke-width="1.3" stroke-linejoin="round"/><path transform="translate(62,232)" d="M0 1h6l1.5 2h8.5v11h-16z" fill="#8c8c8c"/><rect x="59.5" y="254" width="98.5" height="20" fill="#ececec"/><path d="M42.5 257l7.5 7-7.5 7z" fill="none" stroke="#333" stroke-width="1.3" stroke-linejoin="round"/><g transform="translate(62,264)"><path d="M0.7 0c2.5-3.3 4.8-4.6 7.3-4.6s4.8 1.3 7.3 4.6c-2.5 3.3-4.8 4.6-7.3 4.6s-4.8-1.3-7.3-4.6z" fill="none" stroke="#a8a8a8" stroke-width="1.1"/><circle cx="8" cy="0" r="2.6" fill="none" stroke="#a8a8a8" stroke-width="1.1"/><path d="M2.5 -5.5l11 11" stroke="#a8a8a8" stroke-width="1.1"/></g><path transform="translate(87,256)" d="M0 1h6l1.5 2h8.5v11h-16z" fill="#8c8c8c"/><rect x="59.5" y="278" width="102.5" height="20" fill="#ececec"/><path d="M42.5 281l7.5 7-7.5 7z" fill="none" stroke="#333" stroke-width="1.3" stroke-linejoin="round"/><g transform="translate(62,288)"><path d="M0 0c2.5-3.5 5-5 8-5s5.5 1.5 8 5c-2.5 3.5-5 5-8 5s-5.5-1.5-8-5z" fill="#a0a0a0"/><circle cx="8" cy="0" r="2.8" fill="#f0f0f0"/><circle cx="8" cy="0" r="1.6" fill="#a0a0a0"/></g><path transform="translate(87,280)" d="M0 1h6l1.5 2h8.5v11h-16z" fill="#8c8c8c"/><rect x="59.5" y="302" width="114.5" height="20" fill="#ececec"/><path d="M40 317.5l11-11v11z" fill="#444"/><g transform="translate(62,312)"><path d="M0 0c2.5-3.5 5-5 8-5s5.5 1.5 8 5c-2.5 3.5-5 5-8 5s-5.5-1.5-8-5z" fill="#a0a0a0"/><circle cx="8" cy="0" r="2.8" fill="#f0f0f0"/><circle cx="8" cy="0" r="1.6" fill="#a0a0a0"/></g><path transform="translate(87,304)" d="M0 1h6l1.5 2h8.5v11h-16z" fill="#8c8c8c"/><rect x="77" y="326" width="107" height="20" fill="#ececec"/><g transform="translate(80,336)"><path d="M0.7 0c2.5-3.3 4.8-4.6 7.3-4.6s4.8 1.3 7.3 4.6c-2.5 3.3-4.8 4.6-7.3 4.6s-4.8-1.3-7.3-4.6z" fill="none" stroke="#a8a8a8" stroke-width="1.1"/><circle cx="8" cy="0" r="2.6" fill="none" stroke="#a8a8a8" stroke-width="1.1"/><path d="M2.5 -5.5l11 11" stroke="#a8a8a8" stroke-width="1.1"/></g><g transform="translate(105,327)"><path d="M2 1.5h11M1.5 2v13M2 15.5h7M15.5 2v8" stroke="#555" stroke-width="1" stroke-dasharray="2 1.3"/><rect x="0" y="0" width="2.4" height="2.4" fill="#444"/><rect x="13.6" y="0" width="2.4" height="2.4" fill="#444"/><rect x="0" y="14.6" width="2.4" height="2.4" fill="#444"/><path d="M10.5 11.5v-2a2 2 0 0 1 4 0v2" fill="none" stroke="#d03030" stroke-width="1.1"/><rect x="9.5" y="11.5" width="6" height="5" fill="#e04545"/></g><rect x="77" y="350" width="107" height="20" fill="#ececec"/><g transform="translate(80,360)"><path d="M0.7 0c2.5-3.3 4.8-4.6 7.3-4.6s4.8 1.3 7.3 4.6c-2.5 3.3-4.8 4.6-7.3 4.6s-4.8-1.3-7.3-4.6z" fill="none" stroke="#a8a8a8" stroke-width="1.1"/><circle cx="8" cy="0" r="2.6" fill="none" stroke="#a8a8a8" stroke-width="1.1"/><path d="M2.5 -5.5l11 11" stroke="#a8a8a8" stroke-width="1.1"/></g><g transform="translate(105,351)"><path d="M2 1.5h11M1.5 2v13M2 15.5h7M15.5 2v8" stroke="#555" stroke-width="1" stroke-dasharray="2 1.3"/><rect x="0" y="0" width="2.4" height="2.4" fill="#1c8de0"/><rect x="13.6" y="0" width="2.4" height="2.4" fill="#1c8de0"/><rect x="0" y="14.6" width="2.4" height="2.4" fill="#1c8de0"/><path d="M8 17l1-3.5 5.5-5.5 2.5 2.5-5.5 5.5z" fill="#f5a300"/><path d="M14.5 8l1.5-1.5 2.5 2.5-1.5 1.5z" fill="#e03535"/></g><rect x="77" y="374" width="107" height="20" fill="#ececec"/><g transform="translate(80,384)"><path d="M0.7 0c2.5-3.3 4.8-4.6 7.3-4.6s4.8 1.3 7.3 4.6c-2.5 3.3-4.8 4.6-7.3 4.6s-4.8-1.3-7.3-4.6z" fill="none" stroke="#a8a8a8" stroke-width="1.1"/><circle cx="8" cy="0" r="2.6" fill="none" stroke="#a8a8a8" stroke-width="1.1"/><path d="M2.5 -5.5l11 11" stroke="#a8a8a8" stroke-width="1.1"/></g><g transform="translate(105,375)"><path d="M2 1.5h11M1.5 2v13M2 15.5h7M15.5 2v8" stroke="#555" stroke-width="1" stroke-dasharray="2 1.3"/><rect x="0" y="0" width="2.4" height="2.4" fill="#1c8de0"/><rect x="13.6" y="0" width="2.4" height="2.4" fill="#1c8de0"/><rect x="0" y="14.6" width="2.4" height="2.4" fill="#1c8de0"/><path d="M8 17l1-3.5 5.5-5.5 2.5 2.5-5.5 5.5z" fill="#f5a300"/><path d="M14.5 8l1.5-1.5 2.5 2.5-1.5 1.5z" fill="#e03535"/></g></svg>
<div class="t root" style="left:104.4px;top:187.15px;font-size:10.93px;color:#fff;font-weight:bold;">lego brick simplify v3</div>
<div class="t row" style="left:92.6px;top:211.26px;font-size:10.8px;color:#262626;font-weight:normal;">Document Settings</div>
<div class="t row" style="left:92.6px;top:235.26px;font-size:10.8px;color:#262626;font-weight:normal;">Named Views</div>
<div class="t row" style="left:117.4px;top:259.26px;font-size:10.8px;color:#262626;font-weight:normal;">Origin</div>
<div class="t row" style="left:117.4px;top:283.26px;font-size:10.8px;color:#262626;font-weight:normal;">Bodies</div>
<div class="t row" style="left:117.4px;top:307.26px;font-size:10.8px;color:#262626;font-weight:normal;">Sketches</div>
<div class="t row" style="left:135.4px;top:331.26px;font-size:10.8px;color:#262626;font-weight:normal;">Sketch1</div>
<div class="t row" style="left:135.4px;top:355.26px;font-size:10.8px;color:#262626;font-weight:normal;">Sketch2</div>
<div class="t row" style="left:135.4px;top:379.26px;font-size:10.8px;color:#262626;font-weight:normal;">Sketch3</div>
<div class="a" style="left:5px;top:960px;width:300px;height:25px;background:#f1f1f1;border:1px solid #c8c8c8"></div>
<div class="t comm" style="left:30px;top:966.99px;font-size:11px;color:#555;font-weight:normal;">COMMENTS</div>
<svg style="left:282px;top:966px" width="24" height="14"><circle cx="6.3" cy="6.6" r="4.6" fill="#333"/><path d="M3.8 6.6h5M6.3 4.1v5" stroke="#fff" stroke-width="1.3"/><path d="M18.5 1.5v10.5M20.5 3.5v6.5" stroke="#666" stroke-width="1"/></svg>
<div class="a" style="left:498px;top:961px;width:237px;height:24px;background:#ececec;opacity:0.95"></div>
<svg style="left:0;top:0" width="1202" height="1040"><path d="M503.5 971.5c-2 0.8-2.5 2-1 3 2.5 1.6 10 1.6 13 0 2-1.2 1.2-2.6-1.5-3.3" fill="none" stroke="#333" stroke-width="1.3"/>
<path d="M502 976.2l3-2.2v4.4z" fill="#333"/>
<path d="M508.3 980.5v-11.5h-2.3l3.5-4.2 3.5 4.2h-2.3v11.5z" fill="#fff" stroke="#333" stroke-width="1"/>
<path d="M521.5 971h6l-3 3.3z" fill="#333"/>
<g transform="translate(534,965)"><path d="M0.5 6.5h15v9h-15z" fill="#f6f6f6" stroke="#333" stroke-width="1.1"/><path d="M3 6.5l3-3.5 1.5 2 5-2.5v4" fill="#e8e8e8" stroke="#444" stroke-width="1"/><rect x="3.5" y="9.5" width="9" height="3.5" fill="#a9b0bf" stroke="#444" stroke-width="0.8"/></g>
<g transform="translate(560,965)" fill="#f2f2f2" stroke="#333" stroke-width="0.9"><rect x="3.8" y="3" width="2.3" height="9" rx="1.1"/><rect x="6.1" y="0.8" width="2.3" height="10" rx="1.1"/><rect x="8.4" y="1.3" width="2.3" height="10" rx="1.1"/><rect x="10.7" y="3.3" width="2.2" height="8" rx="1.1"/><path d="M3.8 9.5h9.1v2.5c0 2.3-1 3.8-2.6 3.8h-4.3c-1.6-1.1-4-3.6-5.2-5.6-0.5-0.9 0.5-1.7 1.4-1.1l1.6 1.3z"/></g>
<g transform="translate(586,965)"><circle cx="6" cy="7.2" r="4.6" fill="#dfeaf2" stroke="#333" stroke-width="1.4"/><path d="M9.3 10.5l4.2 4.2" stroke="#333" stroke-width="2.4" stroke-linecap="round"/><path d="M12.3 2.5h4.2M14.4 0.4v4.2M12.3 6.8h4.2" stroke="#333" stroke-width="1"/></g>
<g transform="translate(612,965)"><circle cx="6.5" cy="6.5" r="5.6" fill="#e6edf2" stroke="#333" stroke-width="1.3"/><rect x="4" y="4" width="5" height="5" fill="#fff" stroke="#333" stroke-width="1"/><path d="M10.5 10.5l4.5 4.5" stroke="#333" stroke-width="2.4" stroke-linecap="round"/></g>
<path d="M633 971h6l-3 3.3z" fill="#333"/>
<g transform="translate(645,965)"><rect x="0.5" y="0.5" width="16" height="12.5" rx="1" fill="#f0f0f0" stroke="#444" stroke-width="1"/><rect x="2.5" y="2.5" width="12" height="8.5" rx="0.8" fill="#9fc0e6" stroke="#2c4f8a" stroke-width="1"/><path d="M5.5 15.5h6l-1-2h-4z" fill="#fff" stroke="#555" stroke-width="0.8"/></g>
<path d="M664 971h6l-3 3.3z" fill="#333"/>
<defs><linearGradient id="gridg" x1="0" y1="0" x2="0" y2="1"><stop offset="0" stop-color="#fff"/><stop offset="1" stop-color="#9a9a9a"/></linearGradient></defs>
<g transform="translate(676,965)"><rect x="0.5" y="0.5" width="16" height="16" rx="1" fill="url(#gridg)" stroke="#555" stroke-width="1"/><path d="M3.7 0.5v16M6.9 0.5v16M10.1 0.5v16M13.3 0.5v16M0.5 3.7h16M0.5 6.9h16M0.5 10.1h16M0.5 13.3h16" stroke="#666" stroke-width="0.9"/></g>
<path d="M695 971h6l-3 3.3z" fill="#333"/>
<g transform="translate(707,965)"><rect x="0.5" y="0.5" width="16" height="15" rx="1.5" fill="#2f4d85"/><rect x="1.8" y="1.8" width="6.1" height="5.6" fill="#a8c4e6"/><rect x="9.1" y="1.8" width="6.1" height="5.6" fill="#a8c4e6"/><rect x="1.8" y="8.6" width="6.1" height="5.6" fill="#a8c4e6"/><rect x="9.1" y="8.6" width="6.1" height="5.6" fill="#a8c4e6"/>
<g fill="#8fb0d8"><rect x="3.3" y="3.3" width="3" height="2.6"/><rect x="10.6" y="3.3" width="3" height="2.6"/><rect x="3.3" y="10.1" width="3" height="2.6"/><rect x="10.6" y="10.1" width="3" height="2.6"/></g></g>
<path d="M726 971h6l-3 3.3z" fill="#333"/>
</svg>
<div class="a" style="left:1px;top:989px;width:1200px;height:1px;background:#d0d0d0"></div>
<div class="a" style="left:2px;top:990px;width:1199px;height:48px;background:#f2f2f2"></div>
<svg style="left:0;top:0" width="1202" height="1040"><g fill="#474747"><rect x="12" y="1007" width="2" height="14"/><path d="M24.5 1007.5v13l-9-6.5z"/><path d="M36 1014l8-6.5v13z"/><rect x="45" y="1010" width="2.5" height="8"/><path d="M62 1007v14l12-7z"/><rect x="86" y="1010" width="2.5" height="8"/><path d="M89.5 1007.5l8.5 6.5-8.5 6.5z"/><path d="M112 1007.5l9 6.5-9 6.5z"/><rect x="122" y="1007" width="2" height="14"/></g><rect x="145" y="997" width="188" height="6" fill="#fcd27a"/><g transform="translate(147,1005)"><path d="M2 1h10.5M1 2v12M2 14.5h5M14 2v8" stroke="#555" stroke-width="1" stroke-dasharray="2 1.2"/><rect x="0" y="0" width="2.2" height="2.2" fill="#1c8de0"/><rect x="13" y="0" width="2.2" height="2.2" fill="#1c8de0"/><rect x="0" y="13.2" width="2.2" height="2.2" fill="#1c8de0"/><path d="M7.5 15.5l1-3 5-5 2 2-5 5z" fill="#f5a300"/><path d="M13.5 7.5l1.5-1.5 2 2-1.5 1.5z" fill="#e03535"/></g><g transform="translate(171,1005)"><path d="M0.5 4l3.5-3.5h9v10.5l-3.5 3.5h-9z" fill="#6aafe6"/><path d="M0.5 4l3.5-3.5h9l-3.5 3.5z" fill="#93cdf5"/><path d="M9.5 4l3.5-3.5v10.5l-3.5 3.5z" fill="#4b92cc"/><path d="M0.5 15h9.5l3-3" fill="none" stroke="#bbb" stroke-width="1.5"/><path d="M16 15v-12" stroke="#222" stroke-width="1.1"/><path d="M14 5l2-3.5 2 3.5z" fill="#222"/></g><g transform="translate(195,1005)"><path d="M2 1h10.5M1 2v12M2 14.5h5M14 2v8" stroke="#555" stroke-width="1" stroke-dasharray="2 1.2"/><rect x="0" y="0" width="2.2" height="2.2" fill="#1c8de0"/><rect x="13" y="0" width="2.2" height="2.2" fill="#1c8de0"/><rect x="0" y="13.2" width="2.2" height="2.2" fill="#1c8de0"/><path d="M7.5 15.5l1-3 5-5 2 2-5 5z" fill="#f5a300"/><path d="M13.5 7.5l1.5-1.5 2 2-1.5 1.5z" fill="#e03535"/></g><g transform="translate(219,1005)"><path d="M0.5 4l3.5-3.5h9v10.5l-3.5 3.5h-9z" fill="#6aafe6"/><path d="M0.5 4l3.5-3.5h9l-3.5 3.5z" fill="#93cdf5"/><path d="M9.5 4l3.5-3.5v10.5l-3.5 3.5z" fill="#4b92cc"/><path d="M0.5 15h9.5l3-3" fill="none" stroke="#bbb" stroke-width="1.5"/><path d="M16 15v-12" stroke="#222" stroke-width="1.1"/><path d="M14 5l2-3.5 2 3.5z" fill="#222"/></g><g transform="translate(244,1005)"><rect x="0.5" y="0.5" width="3" height="3" fill="none" stroke="#555" stroke-width="1"/><rect x="10" y="0" width="4" height="4" fill="#4b9ae0"/><rect x="0" y="10.5" width="4" height="4" fill="#4b9ae0"/><rect x="10" y="10.5" width="4" height="4" fill="#4b9ae0"/><path d="M5 2h4M5 12.5h4M2 5v4.5" stroke="#555" stroke-width="1"/></g><g transform="translate(267,1005)"><path d="M0.6 15.5v-11.5l3.8-3.5h11.5v11.5l-3.8 3.5z" fill="#dcdcdc" stroke="#555" stroke-width="1.1"/><path d="M0.6 4h11.5v11.5M12 4l3.8-3.5" fill="none" stroke="#555" stroke-width="1.1"/><rect x="2.5" y="6" width="8" height="8" fill="#f0f0f0"/><path d="M3 6.5h3v4h4v3h-7z" fill="#4b92cc"/></g><g transform="translate(291,1005)"><path d="M2 1h10.5M1 2v12M2 14.5h5M14 2v8" stroke="#555" stroke-width="1" stroke-dasharray="2 1.2"/><rect x="0" y="0" width="2.2" height="2.2" fill="#1c8de0"/><rect x="13" y="0" width="2.2" height="2.2" fill="#1c8de0"/><rect x="0" y="13.2" width="2.2" height="2.2" fill="#1c8de0"/><path d="M7.5 15.5l1-3 5-5 2 2-5 5z" fill="#f5a300"/><path d="M13.5 7.5l1.5-1.5 2 2-1.5 1.5z" fill="#e03535"/></g><g transform="translate(315,1005)"><path d="M0.5 4l3.5-3.5h9v10.5l-3.5 3.5h-9z" fill="#6aafe6"/><path d="M0.5 4l3.5-3.5h9l-3.5 3.5z" fill="#93cdf5"/><path d="M9.5 4l3.5-3.5v10.5l-3.5 3.5z" fill="#4b92cc"/><path d="M0.5 15h9.5l3-3" fill="none" stroke="#bbb" stroke-width="1.5"/><path d="M16 15v-12" stroke="#222" stroke-width="1.1"/><path d="M14 5l2-3.5 2 3.5z" fill="#222"/></g><path d="M155.5 1030h168" stroke="#c8c8c8" stroke-width="1.5"/><path d="M155.5 1024v6" stroke="#c8c8c8" stroke-width="1.5"/><path d="M179.5 1024v6" stroke="#c8c8c8" stroke-width="1.5"/><path d="M203.5 1024v6" stroke="#c8c8c8" stroke-width="1.5"/><path d="M227.5 1024v6" stroke="#c8c8c8" stroke-width="1.5"/><path d="M251.5 1024v6" stroke="#c8c8c8" stroke-width="1.5"/><path d="M275.5 1024v6" stroke="#c8c8c8" stroke-width="1.5"/><path d="M299.5 1024v6" stroke="#c8c8c8" stroke-width="1.5"/><path d="M323.5 1024v6" stroke="#c8c8c8" stroke-width="1.5"/><path d="M329.5 999h11.5v3l-4.3 5h-3l-4.2-5z" fill="#555"/><rect x="334.5" y="1006" width="2" height="25" fill="#555"/><g transform="translate(1180,1014)"><circle r="5.8" fill="#999"/><rect x="-1.7" y="-8" width="3.4" height="4" fill="#999" transform="rotate(0)"/><rect x="-1.7" y="-8" width="3.4" height="4" fill="#999" transform="rotate(45)"/><rect x="-1.7" y="-8" width="3.4" height="4" fill="#999" transform="rotate(90)"/><rect x="-1.7" y="-8" width="3.4" height="4" fill="#999" transform="rotate(135)"/><rect x="-1.7" y="-8" width="3.4" height="4" fill="#999" transform="rotate(180)"/><rect x="-1.7" y="-8" width="3.4" height="4" fill="#999" transform="rotate(225)"/><rect x="-1.7" y="-8" width="3.4" height="4" fill="#999" transform="rotate(270)"/><rect x="-1.7" y="-8" width="3.4" height="4" fill="#999" transform="rotate(315)"/><circle r="2.6" fill="#f1f1f1"/></g></svg>
</body></html>
